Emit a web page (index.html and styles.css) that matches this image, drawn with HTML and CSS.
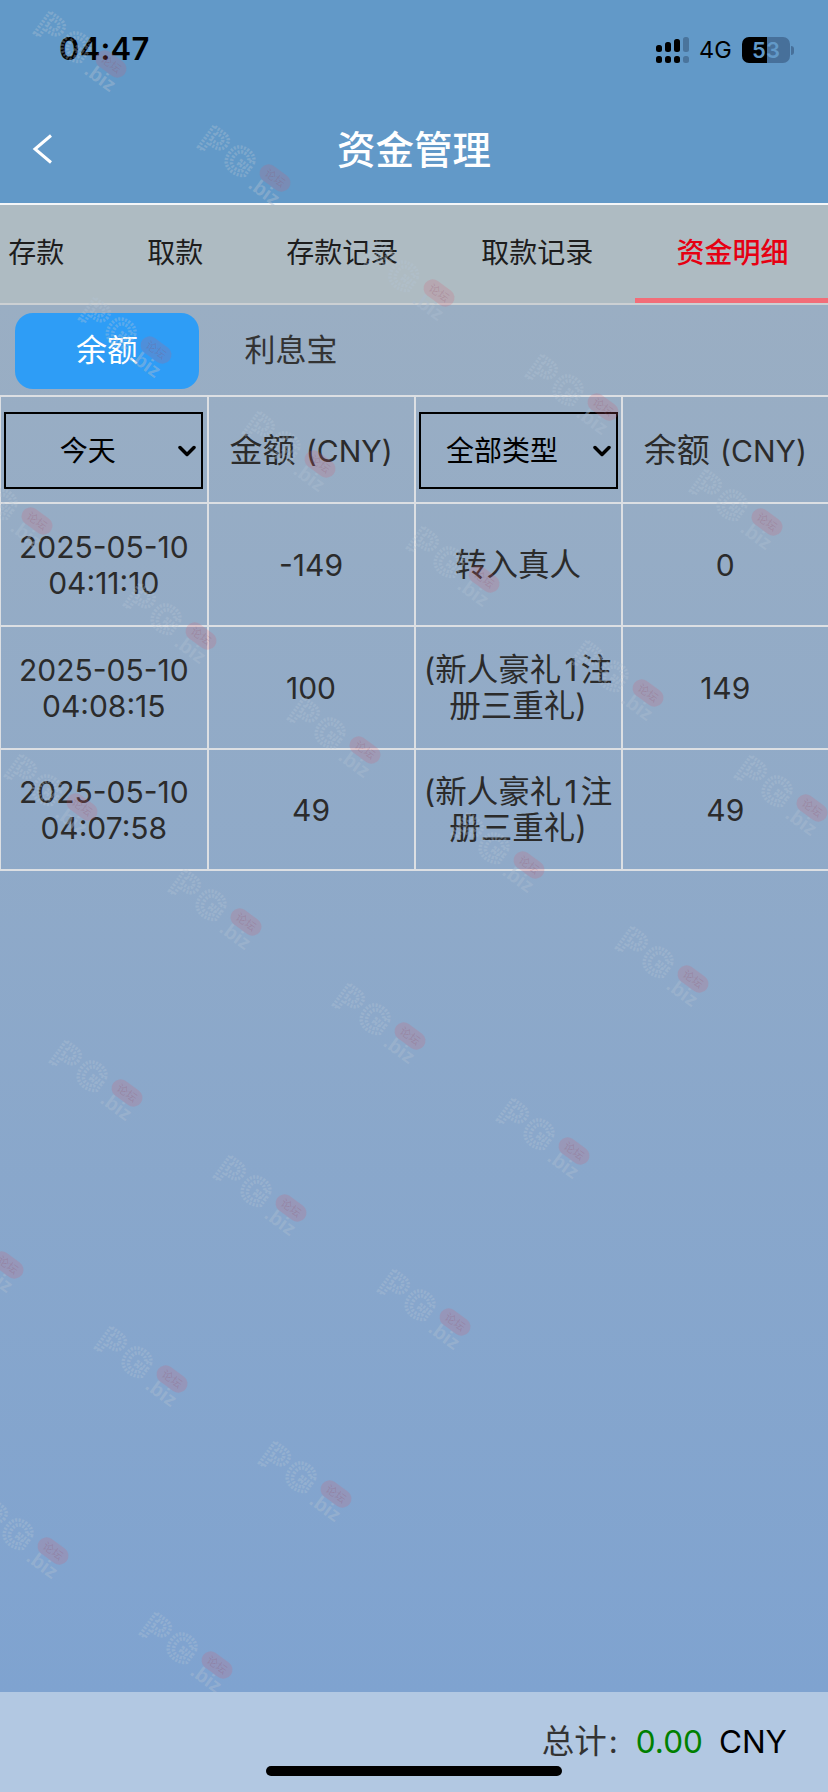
FILE: index.html
```html
<!DOCTYPE html>
<html lang="zh-CN">
<head>
<meta charset="utf-8">
<title>资金管理</title>
<link rel="stylesheet" href="styles.css">
</head>
<body>
<div class="page">
  <header class="top">
    <div class="status">
      <span class="time">04:47</span>
      <div class="status-icons">
        <svg class="signal" width="33" height="27" viewBox="0 0 33 27">
          <rect x="0" y="8" width="6" height="7" rx="2.5"/><rect x="9" y="5" width="6" height="10" rx="2.5"/><rect x="18" y="2" width="6" height="13" rx="2.5"/><rect class="dim" x="27" y="0" width="6" height="15" rx="2.5"/>
          <rect x="0" y="19" width="6" height="7" rx="2.5"/><rect x="9" y="19" width="6" height="7" rx="2.5"/><rect x="18" y="19" width="6" height="7" rx="2.5"/><rect class="dim" x="27" y="19" width="6" height="7" rx="2.5"/>
        </svg>
        <span class="net">4G</span>
        <div class="battery"><span class="level">53</span></div>
        <span class="nub"></span>
      </div>
    </div>
    <div class="nav">
      <svg class="back" width="22" height="30" viewBox="0 0 22 30"><path d="M19 1.5 3 15l16 13.5"/></svg>
      <h1 class="title">资金管理</h1>
    </div>
  </header>

  <nav class="tabs">
    <div class="tab-row">
      <a class="tab">存款</a>
      <a class="tab">取款</a>
      <a class="tab">存款记录</a>
      <a class="tab">取款记录</a>
      <a class="tab active">资金明细</a>
    </div>
  </nav>

  <main class="content">
    <div class="subtabs">
      <a class="sub active">余额</a>
      <a class="sub">利息宝</a>
    </div>
    <table class="ledger">
      <thead>
        <tr>
          <th><div class="pick"><select><option>今天</option></select><svg class="chev" width="18" height="12" viewBox="0 0 18 12"><path d="M2 2.5 9 9.5l7-7"/></svg></div></th>
          <th><span class="cjk">金额</span> (CNY)</th>
          <th><div class="pick"><select><option>全部类型</option></select><svg class="chev" width="18" height="12" viewBox="0 0 18 12"><path d="M2 2.5 9 9.5l7-7"/></svg></div></th>
          <th><span class="cjk">余额</span> (CNY)</th>
        </tr>
      </thead>
      <tbody>
        <tr><td>2025-05-10<br>04:11:10</td><td>-149</td><td class="txt">转入真人</td><td>0</td></tr>
        <tr><td>2025-05-10<br>04:08:15</td><td>100</td><td class="txt">(新人豪礼 1 注册三重礼)</td><td>149</td></tr>
        <tr class="last"><td>2025-05-10<br>04:07:58</td><td>49</td><td class="txt">(新人豪礼 1 注册三重礼)</td><td>49</td></tr>
      </tbody>
    </table>
  </main>

  <svg class="marks" width="828" height="1792" viewBox="0 0 828 1792" aria-hidden="true">
    <defs>
      <symbol id="mark" width="110" height="90" viewBox="0 0 110 90" overflow="visible">
        <text class="m-pg" transform="translate(-1.4,17.5) rotate(36)">PG</text>
        <rect class="m-pill" x="-17" y="-9" width="34" height="18" rx="9" transform="translate(77,50) rotate(36)"/>
        <text class="m-cn" transform="translate(77,50) rotate(36)" x="0" y="4">论坛</text>
        <text class="m-biz" transform="translate(66,64) rotate(36)" x="0" y="6">.biz</text>
      </symbol>
    </defs>
    <use href="#mark" x="34" y="14"/><use href="#mark" x="198" y="128"/><use href="#mark" x="362" y="243"/><use href="#mark" x="526" y="357"/><use href="#mark" x="690" y="472"/>
    <use href="#mark" x="79" y="300"/><use href="#mark" x="243" y="414"/><use href="#mark" x="407" y="529"/><use href="#mark" x="571" y="643"/><use href="#mark" x="735" y="758"/>
    <use href="#mark" x="-40" y="471"/><use href="#mark" x="124" y="586"/><use href="#mark" x="288" y="700"/><use href="#mark" x="452" y="815"/><use href="#mark" x="616" y="929"/>
    <use href="#mark" x="5" y="757"/><use href="#mark" x="169" y="872"/><use href="#mark" x="333" y="986"/><use href="#mark" x="497" y="1101"/>
    <use href="#mark" x="50" y="1043"/><use href="#mark" x="214" y="1158"/><use href="#mark" x="378" y="1272"/>
    <use href="#mark" x="-69" y="1215"/><use href="#mark" x="95" y="1329"/><use href="#mark" x="259" y="1444"/>
    <use href="#mark" x="-24" y="1501"/><use href="#mark" x="140" y="1615"/>
  </svg>

  <footer class="total">
    <span class="total-label"><span class="total-cjk">总计</span>:</span>
    <span class="total-value">0.00</span>
    <span class="total-unit">CNY</span>
  </footer>
  <div class="home-bar"></div>
</div>
</body>
</html>
```
FILE: styles.css
```css
* { box-sizing: border-box; }
html, body { margin: 0; padding: 0; }
body {
  width: 828px;
  height: 1792px;
  overflow: hidden;
  font-family: Inter, "Noto Sans CJK SC", sans-serif;
  color: #333;
}
.page {
  position: relative;
  width: 828px;
  height: 1792px;
  display: flex;
  flex-direction: column;
  overflow: hidden;
  background: #7fa3d0;
}

/* header */
.top {
  height: 205px;
  flex: none;
  background: #6299c8;
  border-bottom: 2px solid #f4f6f8;
}
.status {
  height: 100px;
  padding: 30px 34px 0 59px;
  display: flex;
  justify-content: space-between;
  align-items: flex-start;
}
.time {
  font-size: 31px;
  font-weight: 600;
  line-height: 38px;
  color: #000;
  letter-spacing: 0.2px;
}
.status-icons {
  display: flex;
  align-items: center;
  height: 26px;
  margin-top: 7px;
}
.signal { fill: #000; margin-right: 10px; }
.signal .dim { fill: #4a749c; }
.net { font-size: 23.5px; line-height: 26px; color: #000; margin-right: 10px; width: 33px; white-space: nowrap; }
.battery {
  width: 48px;
  height: 26px;
  border-radius: 7px;
  background: linear-gradient(90deg, #000 0 52%, #47709a 52% 100%);
  display: flex;
  align-items: center;
  justify-content: center;
}
.level { font-size: 22px; font-weight: 600; color: #6299c8; line-height: 26px; }
.nub {
  width: 3px;
  height: 9px;
  margin-left: 1px;
  background: #47709a;
  border-radius: 0 3px 3px 0;
}
.nav {
  position: relative;
  height: 103px;
  display: flex;
  align-items: center;
  justify-content: center;
  padding-bottom: 4px;
}
.back {
  position: absolute;
  left: 32px;
  top: 34px;
  fill: none;
  stroke: #fff;
  stroke-width: 3;
}
.title {
  margin: 0;
  font-size: 38.5px;
  font-weight: 500;
  line-height: 50px;
  color: #fff;
}

/* tabs */
.tabs {
  height: 100px;
  flex: none;
  background: #aebbc2;
  border-bottom: 2px solid #ccd0d3;
  overflow: hidden;
}
.tab-row {
  display: flex;
  margin-left: -33.2px;
  height: 98px;
}
.tab {
  flex: none;
  padding: 0 41.5px;
  font-size: 28px;
  line-height: 96px;
  color: #1d1d1d;
}
.tab.active {
  color: #e60012;
  font-weight: 500;
  border-bottom: 5px solid #f26d78;
  height: 98px;
}

/* content */
.content {
  flex: 1;
  background: linear-gradient(180deg, #9aaec3 0%, #7fa3d0 100%);
}
.subtabs {
  display: flex;
  height: 90px;
  padding: 8px 0 0 15px;
}
.sub {
  width: 184px;
  height: 76px;
  border-radius: 18px;
  font-size: 31px;
  line-height: 74px;
  text-align: center;
  color: #333;
}
.sub.active { background: #2e9df6; color: #fff; }

.ledger {
  width: 828px;
  table-layout: fixed;
  border-collapse: collapse;
  border: 0;
}
.ledger th, .ledger td {
  width: 207px;
  padding: 0 4px;
  border: 2px solid #dcdfe3;
  border-top-width: 1px;
  font-size: 30px;
  font-weight: 400;
  line-height: 36px;
  text-align: center;
  color: #2b2b2b;
}
.ledger td.txt { font-size: 31.5px; word-spacing: -5.5px; }
.cjk { font-size: 33px; margin-right: 2px; }
.ledger th { height: 107px; border-top-width: 2px; padding: 2px 2px 0; }
.ledger td { height: 123px; }
.ledger tr.last td { height: 121px; }
.ledger th:first-child, .ledger td:first-child { border-left-width: 1px; }
.ledger th:last-child, .ledger td:last-child { border-right-width: 1px; }

.pick { position: relative; width: 199px; margin: 0 auto; }
.pick select {
  display: block;
  width: 199px;
  height: 77px;
  appearance: none;
  -webkit-appearance: none;
  background: transparent;
  border: 2px solid #000;
  border-radius: 0;
  padding: 0 32px 0 0;
  font-family: Inter, "Noto Sans CJK SC", sans-serif;
  font-size: 28px;
  color: #000;
  text-align: center;
  text-align-last: center;
}
.chev {
  position: absolute;
  right: 7px;
  top: 33px;
  fill: none;
  stroke: #000;
  stroke-width: 3.5;
  stroke-linecap: round;
  stroke-linejoin: round;
}

/* watermark */
.marks { position: absolute; left: 0; top: 0; pointer-events: none; }
.m-pg {
  font-family: "Liberation Sans", sans-serif;
  font-size: 38px;
  font-weight: 700;
  letter-spacing: 4px;
  fill: none;
  stroke: #b4c5d6;
  stroke-opacity: 0.35;
  stroke-width: 3.5;
  stroke-dasharray: 2 1.5;
}
.m-pill { fill: #d65a6e; fill-opacity: 0.2; }
.m-cn {
  font-family: "Noto Sans CJK SC", sans-serif;
  font-size: 11px;
  text-anchor: middle;
  fill: #8d4c63;
  fill-opacity: 0.22;
}
.m-biz {
  font-family: "Liberation Sans", sans-serif;
  font-size: 20px;
  font-weight: 700;
  text-anchor: middle;
  fill: #aabcd0;
  fill-opacity: 0.45;
}

/* footer */
.total {
  position: relative;
  flex: none;
  height: 100px;
  background: #b2c8e2;
  display: flex;
  justify-content: flex-end;
  align-items: flex-start;
  padding: 29px 41px 0 0;
  font-size: 31.5px;
  line-height: 42px;
}
.total-label { color: #333; margin-right: 18px; }
.total-cjk { font-size: 32.5px; margin-right: 2px; }
.total-value { color: #008000; margin-right: 16px; }
.total-unit { color: #000; }
.home-bar {
  position: absolute;
  left: 266px;
  top: 1766px;
  width: 296px;
  height: 10px;
  border-radius: 5px;
  background: #000;
}
```
